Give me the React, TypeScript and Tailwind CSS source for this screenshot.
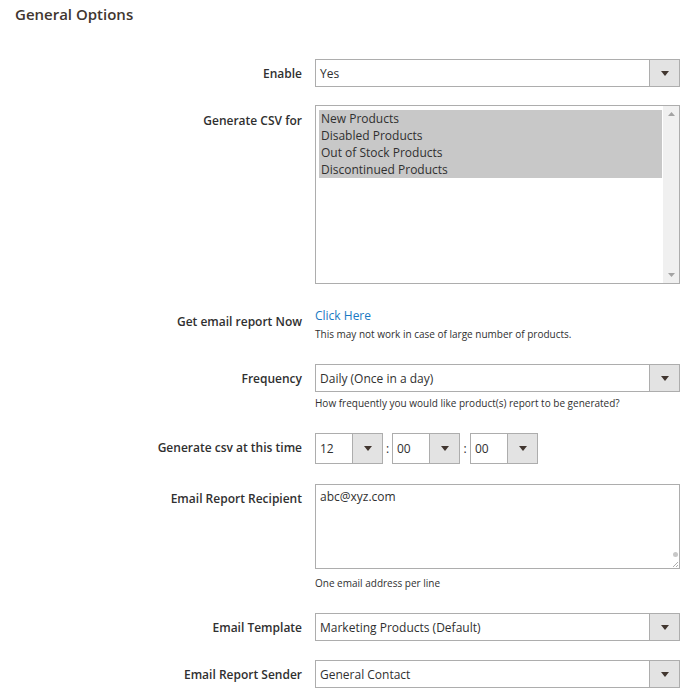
import React from "react";

const Arrow = () => (
  <svg width="8" height="5" viewBox="0 0 8 5">
    <path d="M0 0H8L4 5Z" fill="#41362f" />
  </svg>
);

function Select({ value, w = "w-[365px]", h = "h-[28px]" }: { value: string; w?: string; h?: string }) {
  return (
    <div className={`flex ${w} ${h} border border-[#adadad] bg-white`}>
      <div className="flex-1 pl-[4px] pt-[1px] flex items-center text-[12px] text-[#303030] whitespace-nowrap overflow-hidden">
        {value}
      </div>
      <div className="w-[30px] shrink-0 border-l border-[#adadad] bg-[#e3e3e3] flex items-center justify-center">
        <Arrow />
      </div>
    </div>
  );
}

function Row({
  label,
  labelPt = "pt-[6px]",
  mt,
  children,
}: {
  label: string;
  labelPt?: string;
  mt: string;
  children: React.ReactNode;
}) {
  return (
    <div className={`flex ${mt}`}>
      <div
        className={`w-[302px] shrink-0 text-right text-[12px] font-semibold leading-[18px] text-[#303030] ${labelPt}`}
      >
        {label}
      </div>
      <div className="ml-[13px] w-[365px]">{children}</div>
    </div>
  );
}

function Note({ children, mt }: { children: React.ReactNode; mt: string }) {
  return <div className={`text-[10px] leading-[16px] text-[#303030] ${mt}`}>{children}</div>;
}

export default function App() {
  const options = ["New Products", "Disabled Products", "Out of Stock Products", "Discontinued Products"];
  return (
    <div className="w-[700px] h-[700px] bg-white overflow-hidden font-['Open_Sans',sans-serif] text-[#303030]">
      <div className="pl-[15px] pt-[4px] pb-[1px] text-[15px] font-semibold leading-[20px] text-[#41362f]">
        General Options
      </div>

      <Row label="Enable" mt="mt-[34px]">
        <Select value="Yes" />
      </Row>

      <Row label="Generate CSV for" labelPt="pt-[7px]" mt="mt-[18px]">
        <div className="flex h-[179px] border border-[#adadad] bg-white">
          <div className="flex-1 pl-[3px] pr-[1px] pt-[4px]">
            {options.map((o) => (
              <div key={o} className="bg-[#c8c8c8] pl-[2px] text-[12px] leading-[17px] text-[#303030]">
                {o}
              </div>
            ))}
          </div>
          <div className="w-[16px] bg-[#f0f0f0] flex flex-col items-center justify-between pt-[6px] pb-[6px]">
            <svg width="7" height="4" viewBox="0 0 7 4">
              <path d="M0 4H7L3.5 0Z" fill="#a3a3a3" />
            </svg>
            <svg width="7" height="4" viewBox="0 0 7 4">
              <path d="M0 0H7L3.5 4Z" fill="#a3a3a3" />
            </svg>
          </div>
        </div>
      </Row>

      <Row label="Get email report Now" labelPt="pt-[7px]" mt="mt-[22px]">
        <div className="text-[12px] leading-[18px] pt-[1px] text-[#1979c3]">Click Here</div>
        <Note mt="mt-[1px]">This may not work in case of large number of products.</Note>
      </Row>

      <Row label="Frequency" mt="mt-[22px]">
        <Select value="Daily (Once in a day)" />
        <Note mt="mt-[3px]">How frequently you would like product(s) report to be generated?</Note>
      </Row>

      <Row label="Generate csv at this time" mt="mt-[22px]">
        <div className="flex items-center">
          <Select value="12" w="w-[68px]" h="h-[31px]" />
          <div className="w-[9px] text-center text-[12px]">:</div>
          <Select value="00" w="w-[68px]" h="h-[31px]" />
          <div className="w-[10px] text-center text-[12px]">:</div>
          <Select value="00" w="w-[68px]" h="h-[31px]" />
        </div>
      </Row>

      <Row label="Email Report Recipient" mt="mt-[20px]">
        <div className="relative h-[85px] border border-[#adadad] bg-white pl-[4px] pt-[3px] text-[12px] leading-[18px] text-[#303030]">
          abc@xyz.com
          <div className="absolute right-[1px] bottom-[11px] w-[5px] h-[5px] rounded-full bg-[#c8c8c8]" />
          <svg className="absolute right-[1px] bottom-[1px]" width="6" height="6" viewBox="0 0 6 6">
            <path d="M6 1L1 6M6 4L4 6" stroke="#9a9a9a" strokeWidth="0.8" />
          </svg>
        </div>
        <Note mt="mt-[6px]">One email address per line</Note>
      </Row>

      <Row label="Email Template" mt="mt-[22px]">
        <Select value="Marketing Products (Default)" />
      </Row>

      <Row label="Email Report Sender" mt="mt-[19px]">
        <Select value="General Contact" />
      </Row>
    </div>
  );
}
